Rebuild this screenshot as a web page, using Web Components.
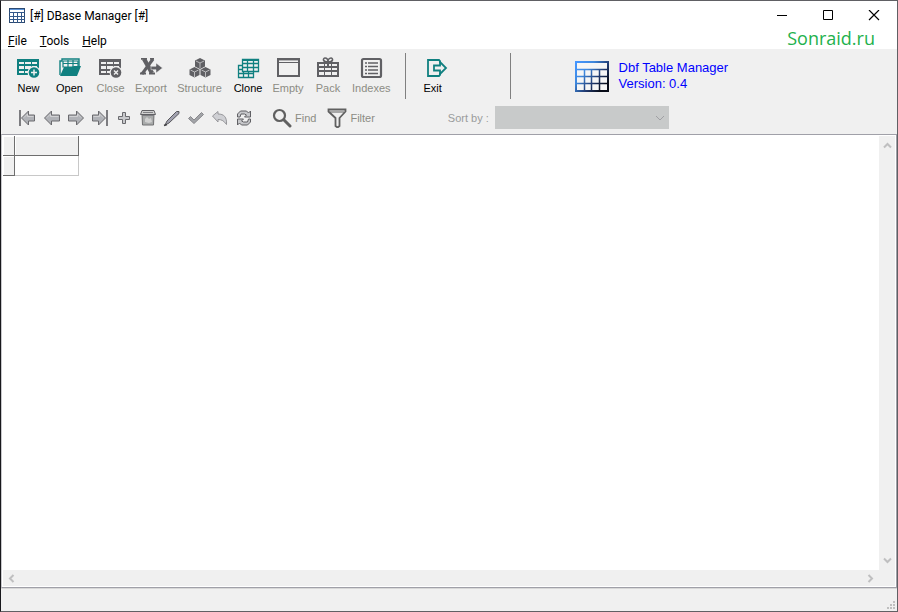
<!DOCTYPE html>
<html lang="en">
<head>
<meta charset="utf-8">
<meta name="viewport" content="width=device-width, initial-scale=1">
<title>[#] DBase Manager [#]</title>
<style>
  body {
    margin: 0;
    background: #f0f0f0;
    font-family: "Liberation Sans", Arial, sans-serif;
    font-size: 11px;
  }
</style>
</head>
<body>
<app-window>
  <title-bar slot="title">[#] DBase Manager [#]</title-bar>
  <menu-bar slot="menu">
    <menu-entry><u>F</u>ile</menu-entry>
    <menu-entry><u>T</u>ools</menu-entry>
    <menu-entry><u>H</u>elp</menu-entry>
    <a slot="site" href="#site">Sonraid.ru</a>
  </menu-bar>

  <tool-row slot="tools">
    <tool-button icon="new" class="wide">New</tool-button>
    <tool-button icon="open" class="wide">Open</tool-button>
    <tool-button icon="close" class="wide" disabled>Close</tool-button>
    <tool-button icon="export" disabled>Export</tool-button>
    <tool-button icon="structure" class="widest" disabled>Structure</tool-button>
    <tool-button icon="clone">Clone</tool-button>
    <tool-button icon="empty" disabled>Empty</tool-button>
    <tool-button icon="pack" disabled>Pack</tool-button>
    <tool-button icon="indexes" disabled>Indexes</tool-button>
    <tool-button slot="exit" icon="exit" class="start">Exit</tool-button>
    <about-box slot="about">
      <span>Dbf Table Manager</span>
      <span>Version: 0.4</span>
    </about-box>
  </tool-row>

  <nav-row slot="tools"></nav-row>
  <data-grid></data-grid>
  <status-bar slot="status"></status-bar>
</app-window>

<script>
// name: [width, height, svg body]
const ICONS = {
  table: [16, 16, `
    <rect x=".5" y=".5" width="15" height="14" fill="#fff" stroke="#2c4a72"/>
    <path d="M0 4.5h16M0 8.5h16M0 11.5h16M4.5 4v11M8.5 4v11M12.5 4v11" stroke="#33588a" fill="none"/>
    <path d="M1 1.5h14" stroke="#5b93d8"/>`],
  new: [24, 24, `
    <path fill-rule="evenodd" fill="currentColor" d="M0 3h22v16H0zM2 6v2h5V6zM8 6v2h6V6zM15 6v2h5V6zM2 10v3h5v-3zM8 10v3h6v-3zM15 10v3h5v-3zM2 15v2h5v-2zM8 15v2h6v-2zM15 15v2h5v-2z"/>
    <circle cx="17" cy="16.5" r="6.5" fill="#f0f0f0"/>
    <circle cx="17" cy="16.5" r="5.3" fill="currentColor"/>
    <path d="M14 16.5h6M17 13.500v6" stroke="#f0f0f0" stroke-width="1.5"/>`],
  open: [24, 24, `
    <path d="M2 19V5h2V3h17v7" fill="none" stroke="currentColor" stroke-width="1.4"/>
    <path d="M5 5h15v6H5zM5 7.500h15M10 4v7M15 4v7" fill="none" stroke="currentColor" stroke-width="1.2"/>
    <path d="M2 20l4-9h8l2-1h7l-4 10z" fill="currentColor"/>`],
  close: [24, 24, `
    <path fill-rule="evenodd" fill="currentColor" d="M0 3h22v16H0zM2 6v2h5V6zM8 6v2h6V6zM15 6v2h5V6zM2 10v3h5v-3zM8 10v3h6v-3zM15 10v3h5v-3zM2 15v2h5v-2zM8 15v2h6v-2zM15 15v2h5v-2z"/>
    <circle cx="17" cy="16.5" r="6.5" fill="#f0f0f0"/>
    <circle cx="17" cy="16.5" r="5.3" fill="currentColor"/>
    <path d="M15 14.500l4 4M19 14.500l-4 4" stroke="#f0f0f0" stroke-width="1.4"/>`],
  export: [24, 24, `
    <path d="M5 3l8 14" stroke="currentColor" stroke-width="4.4"/>
    <path d="M14 3L3 18" stroke="currentColor" stroke-width="3"/>
    <path d="M2 2.800h6M11 2.800h4M1 17.500h6M10 17.500h6" stroke="currentColor" stroke-width="1.8"/>
    <path d="M12 10.300h5V7l6.500 5-6.500 5v-3.300h-5z" fill="currentColor" stroke="#f0f0f0" stroke-width=".5"/>`],
  structure: [24, 24, `
    <path fill="currentColor" d="M12 2l5 2.500v6l-5 2.500-5-2.500v-6zM6.500 11l5 2.500v5.500l-5 2.500-5-2.500v-5.500zM17.500 11l5 2.500v5.500l-5 2.500-5-2.500v-5.500z"/>
    <path d="M8 5l4 2 4-2M12 7v5M2.500 14l4 2 4-2M6.500 16v5M13.500 14l4 2 4-2M17.500 16v5" fill="none" stroke="#c4c4c6" stroke-width=".9"/>`],
  clone: [24, 24, `
    <path d="M2.500 9.500h15v12h-15zM2.500 13.500h15M2.500 17.500h15M7.500 9.500v12M12.500 9.500v12" fill="none" stroke="currentColor" stroke-width="1.300"/>
    <path d="M6 3h17v13H6z" fill="#f0f0f0"/>
    <path d="M6.500 3.500h16v12h-16zM6.500 7.500h16M6.500 11.500h16M11.500 3.500v12M17.500 3.500v12" fill="none" stroke="currentColor" stroke-width="1.300"/>
    <path d="M6 4h17" stroke="currentColor" stroke-width="2"/>`],
  empty: [24, 24, `
    <path d="M2 3h21v17H2z" fill="none" stroke="currentColor" stroke-width="2"/>
    <path d="M2 6.500h21" stroke="currentColor"/>
    <path d="M3 4.500h19" stroke="#b4b4b6"/>`],
  pack: [24, 24, `
    <path fill-rule="evenodd" fill="currentColor" d="M1 6h22v15H1zM3 8v2h5V8zM9 8v2h2V8zM13 8v2h2V8zM16 8v2h5V8zM3 12v2h5v-2zM9 12v2h6v-2zM16 12v2h5v-2zM3 16v3h5v-3zM9 16v3h6v-3zM16 16v3h5v-3z"/>
    <path d="M12 6C6 6 7 2 9 2s3 2 3 4c0-2 1-4 3-4s3 4-3 4" fill="none" stroke="currentColor" stroke-width="1.600"/>`],
  indexes: [24, 24, `
    <rect x="3" y="3" width="19" height="18" rx="1.500" fill="none" stroke="currentColor" stroke-width="2.200"/>
    <path d="M6 7h2M6 10.500h2M6 14h2M6 17.500h2M9 7h10M9 10.500h10M9 14h10M9 17.500h10" stroke="currentColor" stroke-width="1.500"/>`],
  exit: [24, 24, `
    <path d="M16 7V5l-1-1H4v16h11l1-1v-2" fill="none" stroke="currentColor" stroke-width="1.800"/>
    <path d="M10 9.500h6V6l6 6-6 6v-3.500h-6z" fill="#f0f0f0" stroke="currentColor" stroke-width="1.800"/>`],

  first: [20, 20, `
    <path d="M2 2v16" stroke="#606064" stroke-width="1.600"/>
    <path d="M3.500 10l7-7v4h6v6h-6v4z" fill="#b0b2b7" stroke="#6a6a6e"/>
    <path d="M6 9.500L9.500 6v2.500h6" fill="none" stroke="#d2d2d4"/>`],
  prior: [20, 20, `
    <path d="M2.500 10l7-7v4h8v6h-8v4z" fill="#b0b2b7" stroke="#6a6a6e"/>
    <path d="M5 9.500L8.500 6v2.500h8" fill="none" stroke="#d2d2d4"/>`],
  next: [20, 20, `
    <path d="M17.500 10l-7-7v4h-8v6h8v4z" fill="#b0b2b7" stroke="#6a6a6e"/>
    <path d="M15 9.500L11.500 6v2.500h-8" fill="none" stroke="#d2d2d4"/>`],
  last: [20, 20, `
    <path d="M17 2v16" stroke="#606064" stroke-width="1.600"/>
    <path d="M15.500 10l-7-7v4h-6v6h6v4z" fill="#b0b2b7" stroke="#6a6a6e"/>
    <path d="M13 9.500L9.500 6v2.500h-6" fill="none" stroke="#d2d2d4"/>`],
  insert: [20, 20, `
    <path d="M8.500 4.500h3v4h4v3h-4v4h-3v-4h-4v-3h4z" fill="#c8c9cc" stroke="#6a6a6e"/>`],
  erase: [20, 20, `
    <path d="M4 6h12l-.5 11h-11z" fill="#a9abab" stroke="#707072"/>
    <path d="M4 2.500h12l1.500 4h-15z" fill="#d0d0d0" stroke="#606064"/>
    <path d="M5 4.500h10M4 7.500h12" stroke="#808084"/>
    <path d="M7 11l2-2 2 2 2-1 1 4-3 1-4-1z" fill="#d0d0d0"/>`],
  edit: [20, 20, `
    <path d="M3 17l2-4L14.500 3.500h2.500v2L7 15z" fill="#a2a2b0" stroke="#58585c"/>
    <path d="M2 17.500l3-1" stroke="#404044" stroke-width="1.500"/>`],
  post: [20, 20, `
    <path d="M2.500 10.500l2-2L8 12l7.500-7.500 2 2L8 15.500z" fill="#a2a4a8" stroke="#88888c"/>`],
  cancel: [20, 20, `
    <path d="M2.500 8L8 3.500V6c6 0 9 3 8.500 10.500C14 13 12 11.500 8 11.500V14z" fill="#cfd0d4" stroke="#96969a"/>`],
  refresh: [20, 20, `
    <path d="M3.500 9V6l3-3h6l2 2 2-2v6h-6l2-2-2-1H7L6 9z" fill="#c6c7ca" stroke="#606064"/>
    <path d="M16.500 11v3l-3 3h-6l-2-2-2 2v-6h6l-2 2 2 1h4l1-3z" fill="#c6c7ca" stroke="#606064"/>`],
  find: [20, 20, `
    <circle cx="7.500" cy="7.500" r="5.500" fill="none" stroke="#606060" stroke-width="2.200"/>
    <path d="M12 12l6 6" stroke="#606060" stroke-width="3" stroke-linecap="round"/>`],
  filter: [20, 20, `
    <path d="M1.500 1.500h17v2l-6 6.500v8l-2 1.500-2-1.500v-8l-7-6.500z" fill="#f0f0f0" stroke="#606060" stroke-width="1.800"/>
    <path d="M3 4h14" stroke="#606060"/>`],

  logo: [36, 36, `
    <defs><linearGradient id="g" gradientUnits="userSpaceOnUse" x1="1" y1="4" x2="34" y2="32">
      <stop offset="0" stop-color="#4496ff"/><stop offset=".3" stop-color="#3f88dd"/>
      <stop offset=".6" stop-color="#20386c"/><stop offset=".85" stop-color="#080c18"/>
    </linearGradient></defs>
    <rect x="2" y="2" width="32" height="29" fill="#f6f6f6"/>
    <path d="M2 2h32v29H2z" fill="none" stroke="url(#g)" stroke-width="2"/>
    <path d="M2 9.500h32M2 16.500h32M2 23.500h32M10.500 9v22M17.500 9v22M25.500 9v22" fill="none" stroke="url(#g)" stroke-width="1.500"/>`],
  min: [12, 12, `<path d="M1 5.500h10" stroke="#000"/>`],
  max: [12, 12, `<path d="M1.500 .5h9v9h-9z" fill="none" stroke="#000"/>`],
  quit: [12, 12, `<path d="M1 0l10 10M11 0L1 10" stroke="#000" stroke-width="1.200"/>`],
  up: [9, 9, `<path d="M1 6.500l3.500-3.500L8 6.500" fill="none" stroke="#bfbfc0" stroke-width="2"/>`],
  down: [9, 9, `<path d="M1 2.500L4.500 6 8 2.500" fill="none" stroke="#bfbfc0" stroke-width="2"/>`],
  left: [9, 9, `<path d="M6.500 1L3 4.500 6.500 8" fill="none" stroke="#bfbfc0" stroke-width="2"/>`],
  right: [9, 9, `<path d="M2.500 1L6 4.500 2.500 8" fill="none" stroke="#bfbfc0" stroke-width="2"/>`],
  chevron: [10, 10, `<path d="M1 3l4 4 4-4" fill="none" stroke="#a0a0a4"/>`],
  grip: [9, 9, `<path d="M7 0h2v2H7zM4 3h2v2H4zM7 3h2v2H7zM1 6h2v2H1zM4 6h2v2H4zM7 6h2v2H7z" fill="#bfbfbf"/>`]
};

function define(name, html, setup) {
  const template = document.createElement("template");
  template.innerHTML = html;
  customElements.define(name, class extends HTMLElement {
    constructor() {
      super();
      this.attachShadow({ mode: "open" });
      this.shadowRoot.appendChild(template.content.cloneNode(true));
    }
    connectedCallback() {
      if (setup) setup(this, this.shadowRoot);
    }
  });
}

define("glyph-icon", `
  <style>
    :host { display: block; flex: none; }
    svg { display: block; }
  </style>
  <div></div>
`, (el, root) => {
  const [w, h, body] = ICONS[el.getAttribute("name")];
  root.querySelector("div").innerHTML =
    `<svg width="${w}" height="${h}" viewBox="0 0 ${w} ${h}" aria-hidden="true">${body}</svg>`;
});

define("app-window", `
  <style>
    :host {
      display: flex;
      flex-direction: column;
      box-sizing: border-box;
      height: 100vh;
      border: 1px solid #606064;
      border-left-color: #18181c;
      background: #f0f0f0;
    }
    header { background: #fff; }
    main { flex: 1; display: flex; min-height: 0; }
  </style>
  <header>
    <slot name="title"></slot>
    <slot name="menu"></slot>
  </header>
  <slot name="tools"></slot>
  <main><slot></slot></main>
  <slot name="status"></slot>
`);

define("title-bar", `
  <style>
    :host {
      display: flex;
      align-items: center;
      height: 30px;
      padding-left: 8px;
      color: #000;
      font: 12px/16px Roboto, "Open Sans", sans-serif;
    }
    .text { flex: 1; padding-left: 5px; }
    button {
      display: flex;
      align-items: center;
      justify-content: center;
      width: 46px;
      height: 28px;
      padding: 0;
      border: 0;
      background: none;
    }
  </style>
  <glyph-icon name="table"></glyph-icon>
  <span class="text"><slot></slot></span>
  <button aria-label="Minimize"><glyph-icon name="min"></glyph-icon></button>
  <button aria-label="Maximize"><glyph-icon name="max"></glyph-icon></button>
  <button aria-label="Close"><glyph-icon name="quit"></glyph-icon></button>
`);

define("menu-bar", `
  <style>
    :host {
      display: flex;
      justify-content: space-between;
      align-items: center;
      height: 18px;
      padding: 0 22px 0 7px;
    }
    nav { display: flex; gap: 13px; padding-top: 2px; }
    ::slotted(a) {
      color: #22b14c;
      font: 18px/18px "Open Sans", "Noto Sans", sans-serif;
      text-decoration: none;
      padding-bottom: 4px;
    }
  </style>
  <nav><slot></slot></nav>
  <slot name="site"></slot>
`);

define("menu-entry", `
  <style>
    :host { display: block; }
    button {
      display: block;
      padding: 0;
      border: 0;
      background: none;
      color: #000;
      font: 12px/18px Roboto, "Open Sans", sans-serif;
    }
  </style>
  <button><slot></slot></button>
`);

define("tool-row", `
  <style>
    :host {
      display: flex;
      align-items: flex-start;
      height: 49px;
      padding: 4px 0 0 7px;
    }
    .group { display: flex; padding-right: 10px; }
    .exit {
      box-sizing: border-box;
      width: 106px;
      height: 46px;
      padding-left: 18px;
      border: solid #808080;
      border-width: 0 1px;
    }
    .about { padding-left: 63px; }
  </style>
  <div class="group"><slot></slot></div>
  <div class="exit"><slot name="exit"></slot></div>
  <div class="about"><slot name="about"></slot></div>
`);

define("tool-button", `
  <style>
    :host { display: block; min-width: 40px; color: #108080; }
    :host(.wide) { min-width: 41px; }
    :host(.widest) { min-width: 57px; }
    :host([disabled]) { color: #606064; }
    button {
      display: flex;
      flex-direction: column;
      align-items: center;
      width: 100%;
      padding: 3px 4px 0;
      border: 0;
      background: none;
      color: inherit;
      font: inherit;
      line-height: 14px;
    }
    :host(.start) button { align-items: flex-start; padding: 3px 0 0; }
    span { color: #000; padding-top: 1px; }
    button:disabled span { color: #8c8c84; }
  </style>
  <button><span><slot></slot></span></button>
`, (el, root) => {
  const button = root.querySelector("button");
  const icon = document.createElement("glyph-icon");
  icon.setAttribute("name", el.getAttribute("icon"));
  button.prepend(icon);
  button.disabled = el.hasAttribute("disabled");
});

define("about-box", `
  <style>
    :host {
      display: flex;
      gap: 9px;
      padding-top: 7px;
      color: #00f;
      font-size: 13px;
      line-height: 16px;
    }
    div { display: flex; flex-direction: column; }
  </style>
  <glyph-icon name="logo"></glyph-icon>
  <div><slot></slot></div>
`);

define("nav-row", `
  <style>
    :host {
      display: flex;
      align-items: center;
      height: 31px;
      padding: 0 0 1px 15px;
      color: #8c8c84;
    }
    .group { display: flex; padding-right: 5px; }
    button {
      display: flex;
      align-items: center;
      justify-content: center;
      gap: 3px;
      width: 24px;
      height: 24px;
      padding: 0;
      border: 0;
      background: none;
      color: inherit;
      font: inherit;
    }
    button.text { width: auto; margin-left: 11px; }
    label { margin-left: 73px; color: #9a9c9c; }
    .box { display: grid; align-items: center; margin-left: 6px; width: 174px; }
    .box > * { grid-area: 1 / 1; }
    .box glyph-icon { justify-self: end; margin-right: 4px; pointer-events: none; }
    select {
      appearance: none;
      width: 100%;
      height: 23px;
      border: 0;
      border-radius: 0;
      background: #c8caca;
      opacity: 1;
      font: inherit;
    }
  </style>
  <div class="group">
    <button aria-label="First" disabled><glyph-icon name="first"></glyph-icon></button>
    <button aria-label="Prior" disabled><glyph-icon name="prior"></glyph-icon></button>
    <button aria-label="Next" disabled><glyph-icon name="next"></glyph-icon></button>
    <button aria-label="Last" disabled><glyph-icon name="last"></glyph-icon></button>
    <button aria-label="Insert" disabled><glyph-icon name="insert"></glyph-icon></button>
    <button aria-label="Delete" disabled><glyph-icon name="erase"></glyph-icon></button>
    <button aria-label="Edit" disabled><glyph-icon name="edit"></glyph-icon></button>
    <button aria-label="Post" disabled><glyph-icon name="post"></glyph-icon></button>
    <button aria-label="Cancel" disabled><glyph-icon name="cancel"></glyph-icon></button>
    <button aria-label="Refresh" disabled><glyph-icon name="refresh"></glyph-icon></button>
  </div>
  <button class="text" disabled><glyph-icon name="find"></glyph-icon>Find</button>
  <button class="text" disabled><glyph-icon name="filter"></glyph-icon>Filter</button>
  <label for="sort">Sort by :</label>
  <div class="box">
    <select id="sort" disabled></select>
    <glyph-icon name="chevron"></glyph-icon>
  </div>
`);

define("scroll-strip", `
  <style>
    :host {
      display: flex;
      justify-content: space-between;
      align-items: center;
      padding: 0 4px;
      background: #f0f0f0;
    }
    :host([vertical]) { flex-direction: column; padding: 5px 0; }
  </style>
  <slot></slot>
`);

define("data-grid", `
  <style>
    :host {
      flex: 1;
      display: grid;
      grid-template-columns: 1fr 16px;
      grid-template-rows: 1fr 16px;
      border: 1px solid #a0a0a8;
      border-left-color: #c8c8cc;
      padding: 1px;
      background: #fff;
    }
    table { border-collapse: separate; border-spacing: 0; align-self: start; justify-self: start; }
    th, td { box-sizing: border-box; height: 20px; padding: 0; }
    th {
      width: 12px;
      background: #f0f0f0;
      border: solid #6e6e6e;
      border-width: 0 1px 1px 0;
      box-shadow: inset 1px 1px #fff;
    }
    th.name, td { width: 64px; }
    td { border: solid #c8c8c8; border-width: 0 1px 1px 0; }
    .corner { background: #f0f0f0; }
  </style>
  <table>
    <tr><th></th><th class="name"></th></tr>
    <tr><th></th><td></td></tr>
  </table>
  <scroll-strip vertical>
    <glyph-icon name="up"></glyph-icon><glyph-icon name="down"></glyph-icon>
  </scroll-strip>
  <scroll-strip>
    <glyph-icon name="left"></glyph-icon><glyph-icon name="right"></glyph-icon>
  </scroll-strip>
  <div class="corner"></div>
`);

define("status-bar", `
  <style>
    :host {
      display: flex;
      justify-content: flex-end;
      align-items: flex-end;
      box-sizing: border-box;
      height: 23px;
      padding: 0 2px 1px 0;
      border-top: 1px solid #d8d8d8;
    }
  </style>
  <glyph-icon name="grip"></glyph-icon>
`);
</script>
</body>
</html>
